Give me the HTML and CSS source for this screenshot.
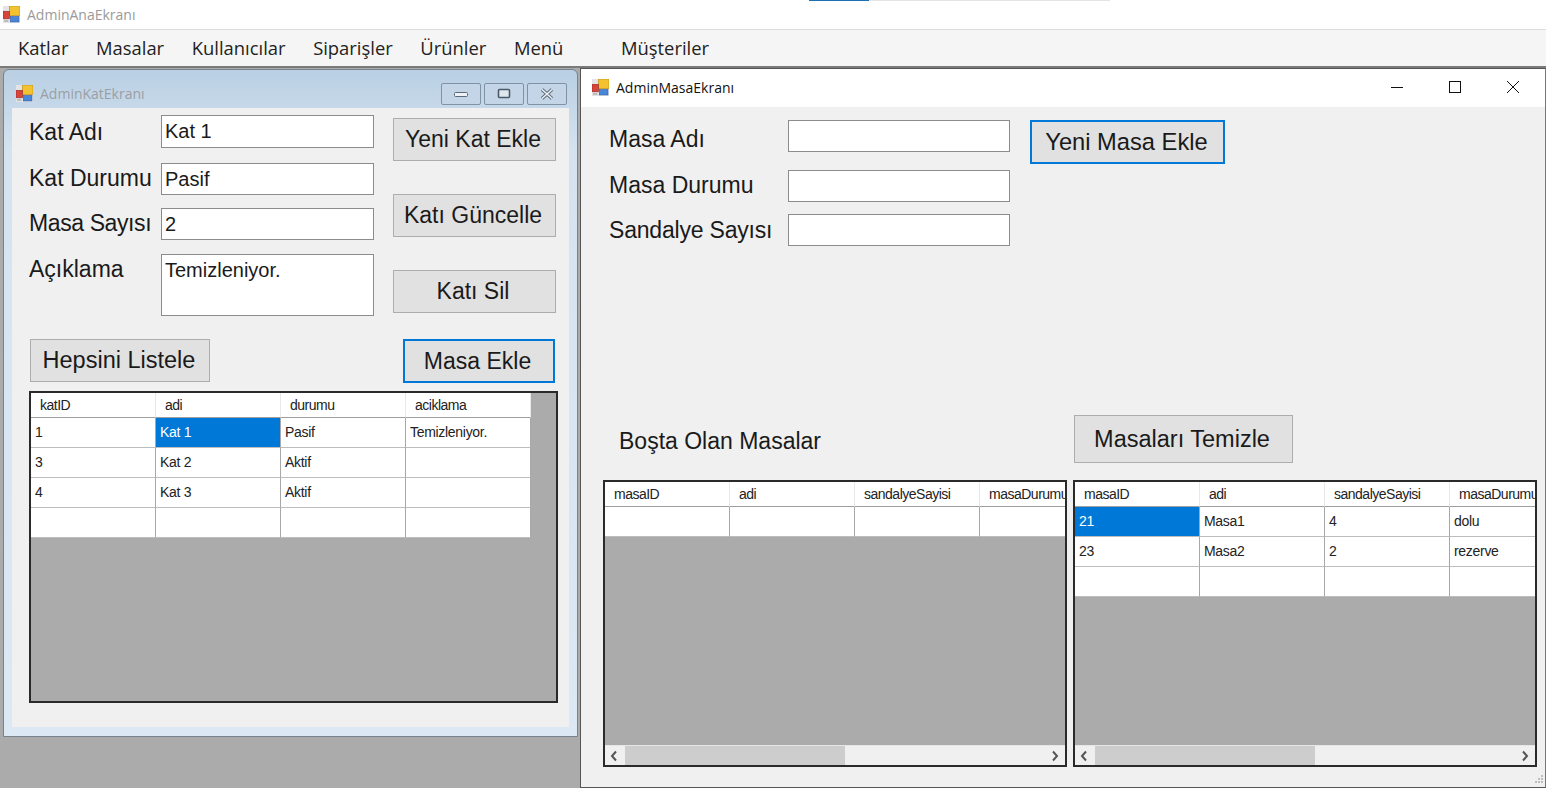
FILE: index.html
```html
<!DOCTYPE html>
<html lang="tr">
<head>
    <meta charset="UTF-8">
    <title>AdminAnaEkranı</title>
    <link rel="stylesheet" href="styles.css">
</head>
<body>
    <svg class="defs" width="0" height="0">
        <symbol id="appicon" viewBox="0 0 16 16">
            <rect x="0" y="0" width="16" height="16" fill="#e4e4e4"/>
            <rect x="6" y="0" width="10" height="9" fill="#f2c230" stroke="#b98a10" stroke-width=".6"/>
            <rect x="0" y="5" width="6" height="7" fill="#d8433a" stroke="#9c2a24" stroke-width=".6"/>
            <rect x="7" y="10" width="8" height="5" fill="#4a86d8" stroke="#2c5ca8" stroke-width=".6"/>
            <rect x="1" y="13" width="4" height="2" fill="#bbbbbb"/>
        </symbol>
    </svg>

    <header class="main-title">
        <svg class="icon"><use href="#appicon"/></svg>
        <span>AdminAnaEkranı</span>
        <div class="taskbar-strip"></div>
    </header>

    <nav class="menu">
        <a>Katlar</a>
        <a>Masalar</a>
        <a>Kullanıcılar</a>
        <a>Siparişler</a>
        <a>Ürünler</a>
        <a>Menü</a>
        <a class="menu-far">Müşteriler</a>
    </nav>

    <main class="mdi">
        <!-- kat penceresi -->
        <section class="win-kat">
            <div class="kat-title">
                <svg class="icon"><use href="#appicon"/></svg>
                <span class="kat-title-text">AdminKatEkranı</span>
                <div class="kat-buttons">
                    <button class="cap-btn"><svg width="16" height="10" viewBox="0 0 16 10"><rect x="1.5" y="3.5" width="13" height="4" rx="1" fill="#eef2f6" stroke="#5a6a78"/></svg></button>
                    <button class="cap-btn"><svg width="14" height="12" viewBox="0 0 14 12"><rect x="1.5" y="1.5" width="11" height="8" rx="1" fill="#dfe7ee" stroke="#4a5a68" stroke-width="1.6"/></svg></button>
                    <button class="cap-btn"><svg width="16" height="12" viewBox="0 0 16 12"><path d="M3 1.5 L13 10.5 M13 1.5 L3 10.5" stroke="#5a6a78" stroke-width="3.4"/><path d="M3 1.5 L13 10.5 M13 1.5 L3 10.5" stroke="#eef2f6" stroke-width="1.6"/></svg></button>
                </div>
            </div>
            <div class="kat-client">
                <div class="kat-top">
                    <div class="kat-fields">
                        <div class="field field-1"><label>Kat Adı</label><div class="txt txt-33">Kat 1</div></div>
                        <div class="field field-2"><label>Kat Durumu</label><div class="txt">Pasif</div></div>
                        <div class="field field-3"><label>Masa Sayısı</label><div class="txt">2</div></div>
                        <div class="field field-4"><label>Açıklama</label><div class="txt txt-area">Temizleniyor.</div></div>
                    </div>
                    <div class="kat-actions">
                        <button class="btn btn-kat">Yeni Kat Ekle</button>
                        <button class="btn btn-kat">Katı Güncelle</button>
                        <button class="btn btn-kat">Katı Sil</button>
                    </div>
                </div>
                <div class="kat-mid">
                    <button class="btn btn-liste">Hepsini Listele</button>
                    <button class="btn btn-masa-ekle focus">Masa Ekle</button>
                </div>
                <div class="grid grid-kat">
                    <table>
                        <tr><th>katID</th><th>adi</th><th>durumu</th><th>aciklama</th></tr>
                        <tr><td>1</td><td class="sel">Kat 1</td><td>Pasif</td><td>Temizleniyor.</td></tr>
                        <tr><td>3</td><td>Kat 2</td><td>Aktif</td><td></td></tr>
                        <tr><td>4</td><td>Kat 3</td><td>Aktif</td><td></td></tr>
                        <tr><td></td><td></td><td></td><td></td></tr>
                    </table>
                </div>
            </div>
        </section>

        <!-- masa penceresi -->
        <section class="win-masa">
            <div class="masa-title">
                <svg class="icon"><use href="#appicon"/></svg>
                <span class="masa-title-text">AdminMasaEkranı</span>
                <div class="masa-buttons">
                    <svg width="14" height="14" viewBox="0 0 14 14"><path d="M1 7.5 H13" stroke="#111" stroke-width="1"/></svg>
                    <svg width="14" height="14" viewBox="0 0 14 14"><rect x="1.5" y="1.5" width="11" height="11" fill="none" stroke="#111"/></svg>
                    <svg width="14" height="14" viewBox="0 0 14 14"><path d="M1 1 L13 13 M13 1 L1 13" stroke="#111" stroke-width="1"/></svg>
                </div>
            </div>
            <div class="masa-client">
                <div class="masa-top">
                    <div class="masa-fields">
                        <div class="masa-field mf-1"><label>Masa Adı</label><div class="txt"></div></div>
                        <div class="masa-field mf-2"><label>Masa Durumu</label><div class="txt"></div></div>
                        <div class="masa-field mf-3"><label>Sandalye Sayısı</label><div class="txt"></div></div>
                    </div>
                    <button class="btn btn-yeni-masa focus">Yeni Masa Ekle</button>
                </div>
                <div class="masa-mid">
                    <h2 class="bosta">Boşta Olan Masalar</h2>
                    <button class="btn btn-temizle">Masaları Temizle</button>
                </div>
                <div class="masa-grids">
                    <div class="grid grid-masa">
                        <div class="grid-view">
                            <table>
                                <tr><th>masaID</th><th>adi</th><th>sandalyeSayisi</th><th>masaDurumu</th></tr>
                                <tr><td></td><td></td><td></td><td></td></tr>
                            </table>
                        </div>
                        <div class="hscroll">
                            <svg width="10" height="12" viewBox="0 0 10 12"><path d="M7 1.5 L3 6 L7 10.5" fill="none" stroke="#555" stroke-width="2"/></svg>
                            <div class="track"><div class="thumb"></div></div>
                            <svg width="10" height="12" viewBox="0 0 10 12"><path d="M3 1.5 L7 6 L3 10.5" fill="none" stroke="#555" stroke-width="2"/></svg>
                        </div>
                    </div>
                    <div class="grid grid-masa">
                        <div class="grid-view">
                            <table>
                                <tr><th>masaID</th><th>adi</th><th>sandalyeSayisi</th><th>masaDurumu</th></tr>
                                <tr><td class="sel">21</td><td>Masa1</td><td>4</td><td>dolu</td></tr>
                                <tr><td>23</td><td>Masa2</td><td>2</td><td>rezerve</td></tr>
                                <tr><td></td><td></td><td></td><td></td></tr>
                            </table>
                        </div>
                        <div class="hscroll">
                            <svg width="10" height="12" viewBox="0 0 10 12"><path d="M7 1.5 L3 6 L7 10.5" fill="none" stroke="#555" stroke-width="2"/></svg>
                            <div class="track"><div class="thumb"></div></div>
                            <svg width="10" height="12" viewBox="0 0 10 12"><path d="M3 1.5 L7 6 L3 10.5" fill="none" stroke="#555" stroke-width="2"/></svg>
                        </div>
                    </div>
                </div>
                <svg class="grip" width="12" height="12" viewBox="0 0 12 12"><path d="M9 1h2v2H9zM6 4h2v2H6zM9 4h2v2H9zM3 7h2v2H3zM6 7h2v2H6zM9 7h2v2H9z" fill="#bdbdbd"/></svg>
            </div>
        </section>
    </main>
</body>
</html>
```

FILE: styles.css
```css
* {
    box-sizing: border-box;
}
body {
    margin: 0;
    width: 1546px;
    height: 788px;
    overflow: hidden;
    display: flex;
    flex-direction: column;
    font-family: "Liberation Sans", Arial, sans-serif;
    background-color: #ababab;
    color: #1a1a1a;
}
.defs {
    position: absolute;
}
.icon {
    width: 17px;
    height: 17px;
    flex: none;
}

/* ana pencere */
.main-title {
    position: relative;
    height: 29px;
    background-color: #fff;
    display: flex;
    align-items: center;
    padding-left: 3px;
    gap: 7px;
    font-family: "Open Sans", sans-serif;
    font-size: 14px;
    color: #9a9a9a;
}
.taskbar-strip {
    position: absolute;
    left: 809px;
    top: 0;
    width: 301px;
    height: 1px;
    background: linear-gradient(to right, #1f6fb5 60px, #e4e4e4 60px);
}
.menu {
    height: 39px;
    background-color: #f5f5f5;
    border-top: 1px solid #dcdcdc;
    border-bottom: 2px solid #7a7a7a;
    display: flex;
    align-items: center;
    padding: 0 0 1px 18px;
    gap: 27.6px;
    font-family: "Open Sans", sans-serif;
    font-size: 18.4px;
    color: #222;
}
.menu-far {
    margin-left: 30px;
}
.mdi {
    position: relative;
    flex: 1;
    background-color: #ababab;
}

/* kat penceresi */
.win-kat {
    position: absolute;
    left: 3px;
    top: 1px;
    width: 575px;
    height: 668px;
    background: linear-gradient(to bottom, #b9cfe3, #d5e3f0 80px, #dce8f4);
    border: 1px solid #76828c;
    border-radius: 6px 6px 0 0;
    padding: 0 8px 9px;
    display: flex;
    flex-direction: column;
}
.kat-title {
    height: 38px;
    flex: none;
    display: flex;
    align-items: center;
    gap: 7px;
    padding: 8px 0 0 4px;
}
.kat-title-text {
    font-family: "Open Sans", sans-serif;
    font-size: 14px;
    color: #9a9fa5;
}
.kat-buttons {
    margin-left: auto;
    margin-right: 2px;
    margin-top: 1px;
    display: flex;
    gap: 3px;
}
.cap-btn {
    width: 40px;
    height: 22px;
    padding: 0;
    display: flex;
    align-items: center;
    justify-content: center;
    background-color: #c3d5e6;
    border: 1px solid #7f93a6;
    border-radius: 2px;
}
.kat-client {
    flex: 1;
    background-color: #f0f0f0;
    padding: 0 12px 0 17px;
    display: flex;
    flex-direction: column;
}
.kat-top {
    display: flex;
    height: 231px;
}
.kat-fields {
    width: 345px;
}
.field {
    display: flex;
    align-items: flex-start;
}
.field label {
    width: 132px;
    flex: none;
    font-size: 23px;
    line-height: 30px;
}
.field-1 { margin-top: 7px; }
.field-2 { margin-top: 15px; }
.field-3 { margin-top: 13px; }
.field-4 { margin-top: 14px; }
.field .txt { width: 213px; }
.field-1 label { margin-top: 2px; }
.field-3 label { letter-spacing: -0.4px; }
.txt {
    height: 32px;
    background-color: #fff;
    border: 1px solid #8c8c8c;
    font-size: 20px;
    line-height: 30px;
    padding-left: 3px;
}
.txt-33 { height: 33px; }
.txt-area { height: 62px; }
.kat-actions {
    margin-left: 19px;
    padding-top: 10px;
    display: flex;
    flex-direction: column;
    gap: 33px;
}
.btn {
    display: block;
    padding: 0;
    background-color: #e1e1e1;
    border: 1px solid #adadad;
    font-family: inherit;
    font-size: 23px;
    color: #1a1a1a;
}
.btn.focus {
    border: 2px solid #0078d7;
}
.btn-kat {
    width: 163px;
    height: 43px;
    padding-right: 3px;
}
.kat-mid {
    display: flex;
    justify-content: space-between;
    align-items: flex-start;
    height: 52px;
    padding-right: 2px;
}
.btn-liste {
    width: 180px;
    height: 43px;
    margin-left: 1px;
    padding-right: 2px;
    font-size: 23.5px;
}
.btn-masa-ekle {
    width: 152px;
    height: 44px;
    padding-right: 3px;
}

/* veri tablolari */
.grid {
    background-color: #ababab;
    border: 2px solid #2a2a2a;
    overflow: hidden;
}
.grid-kat {
    width: 529px;
    height: 312px;
}
table {
    border-collapse: separate;
    border-spacing: 0;
    table-layout: fixed;
    width: 500px;
    background-color: #fff;
}
th, td {
    width: 125px;
    padding: 0 0 0 4px;
    border-right: 1px solid #a8a8a8;
    border-bottom: 1px solid #bdbdbd;
    text-align: left;
    font-weight: normal;
    font-size: 14px;
    letter-spacing: -0.3px;
    white-space: nowrap;
    overflow: hidden;
    color: #222;
}
th {
    height: 25px;
    padding-left: 9px;
    letter-spacing: -0.5px;
    border-right-color: #e8e8e8;
    border-bottom-color: #9f9f9f;
}
td {
    height: 30px;
    padding-bottom: 2px;
}
td.sel {
    background-color: #0078d7;
    color: #fff;
}

/* masa penceresi */
.win-masa {
    position: absolute;
    left: 580px;
    top: 0;
    width: 966px;
    height: 720px;
    background-color: #f0f0f0;
    border: 1px solid #555;
    border-right-color: #777;
    display: flex;
    flex-direction: column;
}
.masa-title {
    height: 38px;
    flex: none;
    background-color: #fff;
    display: flex;
    align-items: center;
    gap: 7px;
    padding: 0 0 2px 11px;
}
.masa-title-text {
    font-family: "Open Sans", sans-serif;
    font-size: 14px;
    color: #111;
}
.masa-buttons {
    margin-left: auto;
    margin-right: 25px;
    display: flex;
    gap: 44px;
}
.masa-client {
    flex: 1;
    position: relative;
    padding: 0 8px 0 22px;
    display: flex;
    flex-direction: column;
}
.masa-top {
    display: flex;
    height: 308px;
    padding: 13px 0 0 6px;
}
.masa-fields {
    width: 421px;
}
.masa-field {
    display: flex;
    align-items: flex-start;
    height: 32px;
}
.masa-field label {
    width: 179px;
    flex: none;
    font-size: 23px;
    line-height: 34px;
    white-space: nowrap;
}
.masa-field .txt {
    width: 222px;
}
.mf-1 label { margin-top: 2px; }
.mf-2 { margin-top: 18px; }
.mf-2 label { margin-top: -2px; }
.mf-3 { margin-top: 12px; }
.mf-3 label { margin-top: -1px; letter-spacing: -0.2px; }
.btn-yeni-masa {
    width: 195px;
    height: 44px;
    padding-right: 2px;
    font-size: 23.7px;
}
.masa-mid {
    display: flex;
    align-items: flex-start;
    height: 65px;
}
.bosta {
    margin: 11px 0 0 16px;
    width: 455px;
    font-weight: normal;
    font-size: 23px;
    line-height: 30px;
}
.btn-temizle {
    width: 219px;
    height: 48px;
    padding-right: 3px;
    font-size: 23.5px;
}
.masa-grids {
    display: flex;
    gap: 6px;
}
.grid-masa {
    width: 464px;
    height: 287px;
    display: flex;
    flex-direction: column;
}
.grid-view {
    flex: 1;
    overflow: hidden;
}
.hscroll {
    height: 20px;
    flex: none;
    background-color: #f0f0f0;
    border-top: 1px solid #e6e6e6;
    display: flex;
    align-items: center;
    padding: 0 5px 0 4px;
    gap: 3px;
}
.track {
    flex: 1;
    height: 100%;
}
.thumb {
    width: 220px;
    height: 100%;
    margin-left: 3px;
    background-color: #cdcdcd;
}
.grip {
    position: absolute;
    right: 1px;
    bottom: 1px;
}
```
